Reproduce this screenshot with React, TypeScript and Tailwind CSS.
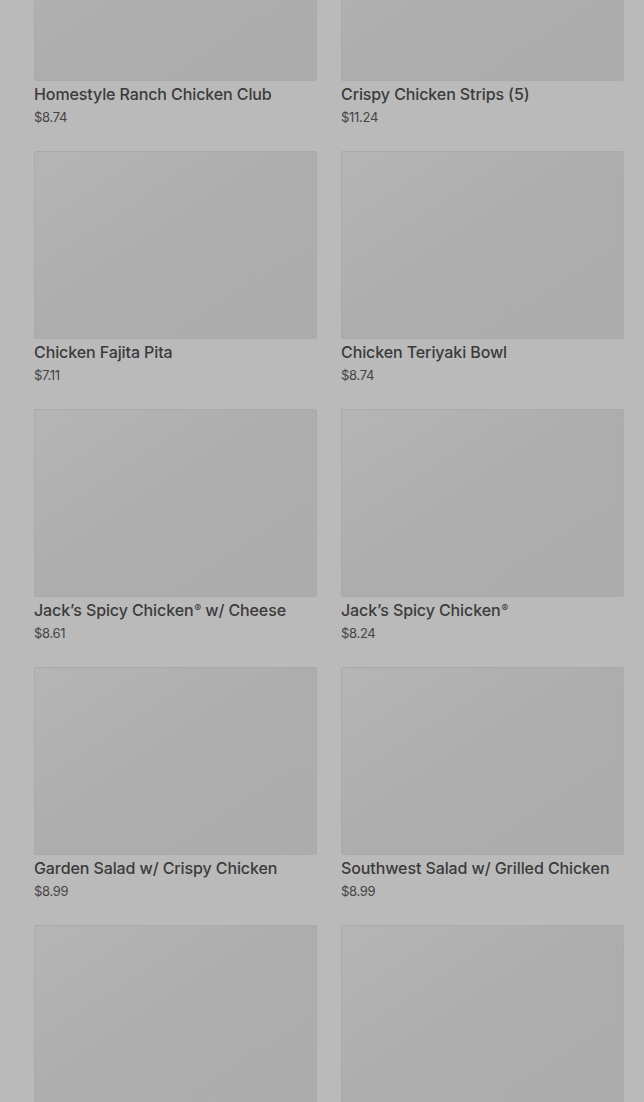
import React from 'react';

type Item = { name?: string; price?: string };

const items: Item[] = [
  { name: 'Homestyle Ranch Chicken Club', price: '$8.74' },
  { name: 'Crispy Chicken Strips (5)', price: '$11.24' },
  { name: 'Chicken Fajita Pita', price: '$7.11' },
  { name: 'Chicken Teriyaki Bowl', price: '$8.74' },
  { name: 'Jack’s Spicy Chicken® w/ Cheese', price: '$8.61' },
  { name: 'Jack’s Spicy Chicken®', price: '$8.24' },
  { name: 'Garden Salad w/ Crispy Chicken', price: '$8.99' },
  { name: 'Southwest Salad w/ Grilled Chicken', price: '$8.99' },
  // below the fold, only images visible
  {},
  {},
];

const renderName = (name: string) => {
  const parts = name.split('®');
  return parts.map((p, i) => (
    <React.Fragment key={i}>
      {p}
      {i < parts.length - 1 && <sup className="text-[10px] top-[-0.45em] ml-[1px]">®</sup>}
    </React.Fragment>
  ));
};

const MenuCard = ({ item }: { item: Item }) => {
  return (
    <div className="flex flex-col">
      <div className="h-[188px] rounded-[2px] border border-[#aaaaaa] bg-gradient-to-br from-[#b5b5b5] via-[#adadad] to-[#acacac]" />
      {item.name && (
        <>
          <div className="mt-[1px] text-[16px] leading-6 font-medium text-[#3b3b3b] tracking-[-0.1px]">
            {renderName(item.name)}
          </div>
          <div className="mt-[1px] text-[13px] leading-5 text-[#444444] tracking-[-0.3px]">{item.price}</div>
        </>
      )}
    </div>
  );
};

export default function App() {
  return (
    <div className="h-[1102px] overflow-hidden bg-[#bababa]" style={{ fontFamily: 'Inter, "Noto Sans", sans-serif' }}>
      <div className="mt-[-107px] pl-[34px] pr-[20px] grid grid-cols-2 gap-x-[24px] gap-y-[24px]">
        {items.map((item, i) => (
          <MenuCard key={i} item={item} />
        ))}
      </div>
    </div>
  );
}
